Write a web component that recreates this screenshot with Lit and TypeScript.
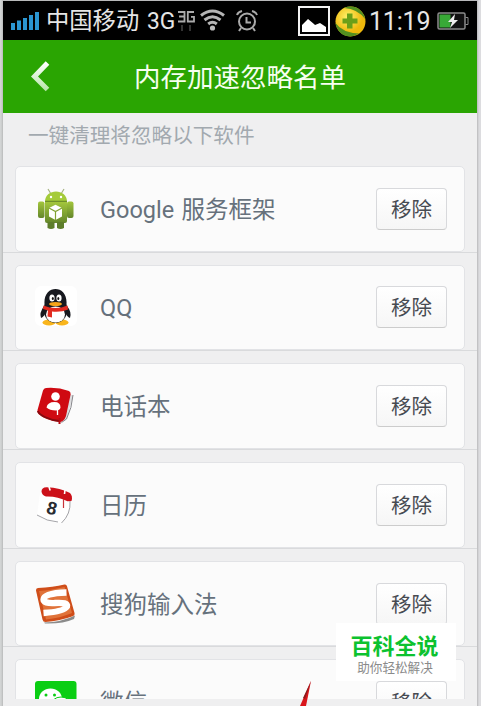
import { LitElement, html, css, svg } from "lit";
import { customElement, property } from "lit/decorators.js";

const ICONS: Record<string, unknown> = {
    android: svg`
        <defs><linearGradient id="g" x1="0" y1="0" x2="0" y2="1"><stop offset="0" stop-color="#a3c63c"/><stop offset="1" stop-color="#64862a"/></linearGradient></defs>
        <path d="M13 1l3 5M29 1l-3 5" stroke="#a6b380" stroke-width="1.200"/>
        <path d="M10 13.500C10 0 32 0 32 13.500z" fill="#a4cb39"/>
        <path d="M10 13.500h22" stroke="#6f8f2a" stroke-width="1.500"/>
        <circle cx="16" cy="9" r="1.200" fill="#fff"/><circle cx="26" cy="9" r="1.200" fill="#fff"/>
        <rect x="3" y="13.500" width="6.500" height="16.500" rx="2" fill="url(#g)"/>
        <rect x="32" y="13.500" width="6.500" height="16.500" rx="2" fill="url(#g)"/>
        <path d="M10 14h22v19q0 2-2 2H12q-2 0-2-2z" fill="url(#g)"/>
        <path d="M12.500 34h7v6q-3.500 2-7 0zM22 34h7v6q-3.500 2-7 0z" fill="#5d7d2a"/>
        <path d="M14 20l6.500-3.200L27 20v8.500l-6.500 3.500-6.500-3.500z" fill="#fff"/>
        <path d="M14 20l6.500 3.500L27 20M20.500 23.500v8.500" stroke="#82a234" stroke-width="1.200" fill="none"/>`,
    qq: svg`
        <rect width="42" height="40" rx="6" fill="#fff"/>
        <ellipse cx="14" cy="36.500" rx="6.500" ry="3" fill="#f9b51c"/><ellipse cx="27" cy="36.500" rx="6.500" ry="3" fill="#f9b51c"/>
        <path d="M9 20q-5 7-3 12 3-1 5-6zM32 20q5 6 3 12-3-1-5-6z" fill="#17191f"/>
        <path d="M9.500 18C8 -2 33 -2 31.500 18c6 25-28 25-22 0z" fill="#17191f"/>
        <ellipse cx="20.500" cy="28.500" rx="9.500" ry="8" fill="#fff"/>
        <ellipse cx="17" cy="12" rx="2.600" ry="3.500" fill="#fff"/><ellipse cx="24" cy="12" rx="2.600" ry="3.500" fill="#fff"/>
        <ellipse cx="17.800" cy="12.500" rx="1" ry="1.600" fill="#111"/><ellipse cx="23.300" cy="12.500" rx="1" ry="1.600" fill="#111"/>
        <ellipse cx="20.500" cy="18" rx="6.500" ry="2" fill="#f7a51b"/>
        <path d="M8.500 19.500q12 5 24 0l.5 4q-7 3-16 2v6l-4.500-1 .5-6-5-1.500z" fill="#e22b20"/>`,
    contacts: svg`
        <path d="M35 9l3 2-6.500 23-7 4z" fill="#dedee0"/>
        <path d="M38 10q-1 13-6.500 24l-5 3.500" stroke="#85858a" stroke-width="1" fill="none"/>
        <path d="M11 3Q23 2 34 6q2 1 1.600 3.500L31 31q-2 6-7 6Q10 35 3.500 29q-1.500-1.500-1-4L8 5.500Q8.800 3.200 11 3z" fill="#cf0a12"/>
        <path d="M2.800 26q1 3 7 6 7 3.500 15 4" stroke="#850b10" stroke-width="1.800" fill="none"/>
        <path d="M24.500 33v6" stroke="#b30b12" stroke-width="2"/>
        <circle cx="20.500" cy="11.500" r="4.300" fill="#fff"/>
        <path d="M11.500 22.500q1-5.500 8-5.500 6 0 6 5.500-.5 3-4.500 3-6.500 0-9.500-3z" fill="#fff"/>
        <path d="M22.500 24v6" stroke="#fff" stroke-width="1.300"/>`,
    calendar: svg`
        <path d="M5 9h30q2 16-8 30Q13 39 2 31z" fill="#fff"/>
        <path d="M2 31q10 6.500 21 7M35 17q1 13-8.500 22" stroke="#a4a4a8" stroke-width="1" fill="none"/>
        <path d="M6.500 7.500q0-4 5-4.200 14 .7 23.500 5.700 3 3 1.500 8l-4 .3Q22 12 11 12.500 7 11.500 6.500 7.500z" fill="#cc1019"/>
        <path d="M14 3l1.200 3.500M30 6l-.5 4" stroke="#fff" stroke-width="1.600"/>
        <path d="M28.500 15v9" stroke="#c8323a" stroke-width="1.200"/>
        <text x="12" y="30.500" font-family="Liberation Sans" font-size="18" font-weight="700" fill="#292c32" transform="rotate(14 17 24)">8</text>`,
    sogou: svg`
        <path d="M9 39.500q18-.5 31-7l-1 3.500q-11 5-29 4.500z" fill="#8b8b8b"/>
        <path d="M3 5Q18 4 29.500 1.500q2-.3 2.500 1.700L39.500 30q.5 2.500-2 3.200Q25 38 10.500 39q-2.500 0-3-2.500L1 7.500Q.7 5.300 3 5z" fill="#cf4d19"/>
        <path d="M4 8q14-1 25.500-4L37 30q-12 5-26 6.500z" fill="#e0733a"/>
        <path d="M31.500 9.500Q9 10 8.500 16.500q0 4 11 3.500 14-1 12.500 3.500-3 5-23.500 6.500" stroke="#fff" stroke-width="6.300" fill="none"/>`,
    wechat: svg`
        <rect width="41.500" height="41.500" rx="3" fill="#0ace13"/>
        <ellipse cx="15.500" cy="18" rx="11.500" ry="10.500" fill="#fff"/>
        <circle cx="11" cy="14" r="1.500" fill="#0ace13"/><circle cx="19.500" cy="14" r="1.500" fill="#0ace13"/>
        <ellipse cx="26" cy="25" rx="10.500" ry="9" fill="#fff" stroke="#0ace13"/>`
};

const APPS = [
    { name: "Google 服务框架", icon: "android" },
    { name: "QQ", icon: "qq" },
    { name: "电话本", icon: "contacts" },
    { name: "日历", icon: "calendar" },
    { name: "搜狗输入法", icon: "sogou" },
    { name: "微信", icon: "wechat" }
];

@customElement("status-bar")
class StatusBar extends LitElement {
    static styles = css`
        :host {
            display: flex;
            align-items: center;
            height: 39px;
            box-sizing: border-box;
            padding: 1px 8px 0 7px;
            background: #000;
            color: #e6e6e6;
            font-size: 23.3px;
            line-height: 38px;
            white-space: pre;
        }
        svg {
            display: block;
            flex: none;
        }
        .signal {
            margin-right: 7px;
        }
        .net {
            margin-left: 8px;
            font-size: 24px;
            transform: scaleX(.95);
            transform-origin: left;
            width: 29px;
        }
        .net3g {
            margin: 0 4px 0 2px;
            align-self: flex-start;
            margin-top: 8px;
        }
        .wifi {
            margin-top: -2px;
        }
        .alarm {
            margin-left: 11px;
        }
        .picture {
            margin-left: auto;
        }
        .shield {
            margin: 0 3px 0 5px;
        }
        .time {
            font-size: 25px;
            width: 60px;
            letter-spacing: -.2px;
            margin-top: 2px;
        }
        .battery {
            margin-left: 8px;
        }
    `

    render() {
        return html`
        <svg class="signal" width="29" height="18" viewBox="0 0 29 18">
            <path d="M1 11h4v7H1zM7 8.500h4V18H7zM13 6h4v12h-4zM19 3h4v15h-4zM25 0h4v18h-4z" fill="#2b96d2"/>
        </svg>
        <span>中国移动</span><span class="net">3G</span>
        <svg class="net3g" width="18" height="22" viewBox="0 0 18 22">
            <path d="M0 2h6.500v9.500H0M1 6.500h5M16 2H9.800v9.500H16V6.800h-3" stroke="#aaa" stroke-width="1.800" fill="none"/>
            <path d="M4 15v6M12 15v6" stroke="#444" stroke-width="1.500"/>
        </svg>
        <svg class="wifi" width="25" height="22" viewBox="0 0 25 22">
            <path d="M1 6.500q11.500-9 23 0M4.500 11q8-6.500 16 0M8.200 15q4.300-3.500 8.600 0" stroke="#b5b5b5" stroke-width="3" fill="none"/>
            <circle cx="12.500" cy="19" r="2.600" fill="#bbb"/>
        </svg>
        <svg class="alarm" width="22" height="22" viewBox="0 0 22 22">
            <circle cx="11" cy="11.500" r="8" stroke="#aaa" stroke-width="2" fill="none"/>
            <path d="M1 5q1-3 5-4M21 5q-1-3-5-4M5 18l-2 3M17 18l2 3M10.500 7v5.500H15" stroke="#aaa" stroke-width="2" fill="none"/>
        </svg>
        <svg class="picture" width="32" height="30" viewBox="0 0 32 30">
            <rect x="1" y="1" width="30" height="28" stroke="#f3f3f3" stroke-width="2" fill="none"/>
            <path d="M4 26v-7l6-6 6 5 1 1 5-2 6 4v5z" fill="#fff"/>
        </svg>
        <svg class="shield" width="31" height="31" viewBox="0 0 31 31">
            <defs><radialGradient id="s" cx=".4" cy=".35"><stop offset="0" stop-color="#fff26a"/><stop offset="1" stop-color="#eeb80c"/></radialGradient></defs>
            <circle cx="15.500" cy="15.500" r="15" fill="url(#s)"/>
            <path d="M9 2Q22-3 29 9l1 4Q23 3 9 2zM.5 17q7 10 24 10.500Q8 36 1 20z" fill="#528f20"/>
            <path d="M12 7.500h5.500v5h5v5h-5v5H12v-5H7.500v-5H12z" fill="#6b9f18"/>
        </svg>
        <span class="time">11:19</span>
        <svg class="battery" width="32" height="18" viewBox="0 0 32 18">
            <rect x="1" y="1" width="27" height="16" rx="1.500" stroke="#8b8b8b" stroke-width="1.500" fill="#111"/>
            <path d="M28.500 5.500H31v7h-2.500" stroke="#8b8b8b" fill="none"/>
            <rect x="2.500" y="2.500" width="11" height="13" fill="#38a936"/>
            <path d="M18 2l-7 8h4l-2 6 8-8h-4z" fill="#eee"/>
        </svg>
        `
    }
}

@customElement("app-row")
class AppRow extends LitElement {
    @property({ type: String }) name = "";
    @property({ type: String }) icon = "";

    static styles = css`
        :host {
            display: block;
            flex: none;
            box-sizing: border-box;
            height: 98.7px;
            padding: 12px 12px 0;
            border-bottom: 1px solid #d9dadc;
        }
        .card {
            display: flex;
            align-items: center;
            box-sizing: border-box;
            height: 85.500px;
            padding: 0 17px 0 19px;
            border: 1px solid #e2e3e6;
            border-radius: 5px;
            background: #fbfbfb;
        }
        svg {
            width: 42px;
            height: 42px;
            flex: none;
        }
        .name {
            flex: 1;
            margin-left: 23px;
            padding-top: 2px;
            color: #66717c;
            font-size: 23.500px;
            line-height: 34px;
            word-spacing: 1.500px;
        }
        button {
            box-sizing: border-box;
            width: 71px;
            height: 42px;
            padding: 0 0 2px;
            border: 1px solid #d8d9dc;
            border-bottom-color: #ccc;
            border-radius: 4px;
            background: linear-gradient(#fff, #f6f6f6);
            color: #474b52;
            font: inherit;
            font-size: 20.500px;
        }
    `

    render() {
        return html`
        <div class="card">
            <svg viewBox="0 0 42 42" fill="none">${ICONS[this.icon]}</svg>
            <span class="name">${this.name}</span>
            <button>移除</button>
        </div>
        `
    }
}

@customElement("app-root")
class AppRoot extends LitElement {
    static styles = css`
        :host {
            display: block;
            position: relative;
            box-sizing: border-box;
            width: 481px;
            height: 706px;
            overflow: hidden;
            padding: 1px 4px 0 3px;
            background: linear-gradient(90deg, #d2d4d4 0 1px, #b9baba 3px, #b9b9bb 477px, #dcdcdf 479px);
            font-family: Roboto, "Noto Sans CJK SC", sans-serif;
        }
        .screen {
            display: flex;
            flex-direction: column;
            height: 705px;
            background: #efeff0;
        }
        header {
            display: grid;
            grid-template-columns: 73px 1fr 73px;
            align-items: center;
            flex: none;
            box-sizing: border-box;
            height: 73px;
            padding-bottom: 2px;
            background: #2aa502;
            color: #f6fff0;
            font-size: 26.500px;
            text-align: center;
        }
        header svg {
            margin-left: 27px;
        }
        .hint {
            flex: none;
            box-sizing: border-box;
            height: 41px;
            padding: 8px 25px 0;
            color: #a2a9af;
            font-size: 20.600px;
            line-height: 30px;
        }
        .list {
            display: flex;
            flex-direction: column;
            height: 545px;
            overflow: hidden;
        }
        .mark {
            position: absolute;
            left: 336px;
            top: 623px;
            width: 120px;
            height: 58px;
            background: #fff;
            text-align: center;
        }
        .mark b {
            display: block;
            margin: 10px 0 0 -3px;
            color: #0cc22f;
            font-size: 22px;
            font-weight: 700;
            line-height: 28px;
        }
        .mark small {
            display: block;
            margin-left: -2px;
            color: #8a8a8a;
            font-size: 12.600px;
            line-height: 14px;
        }
        .arrow {
            position: absolute;
            left: 298px;
            top: 680px;
        }
    `

    render() {
        return html`
        <div class="screen">
            <status-bar></status-bar>
            <header>
                <svg width="21" height="34" viewBox="0 0 21 34">
                    <defs><linearGradient id="b" x1="0" y1="0" x2="0" y2="1"><stop offset="0" stop-color="#fff"/><stop offset="1" stop-color="#b9e6ac"/></linearGradient></defs>
                    <path d="M17.500 4L4.500 17.500l13 13" stroke="url(#b)" stroke-width="5" fill="none"/>
                </svg>
                <span>内存加速忽略名单</span>
            </header>
            <div class="hint">一键清理将忽略以下软件</div>
            <div class="list">
                ${APPS.map(app => html`<app-row .name=${app.name} .icon=${app.icon}></app-row>`)}
            </div>
        </div>
        <div class="mark"><b>百科全说</b><small>助你轻松解决</small></div>
        <svg class="arrow" width="15" height="26" viewBox="0 0 15 26">
            <path d="M13 1L8 26H2z" fill="#d9151b"/>
            <path d="M13 1L5 18l2 1z" fill="#8b1a1d"/>
        </svg>
        `
    }
}
